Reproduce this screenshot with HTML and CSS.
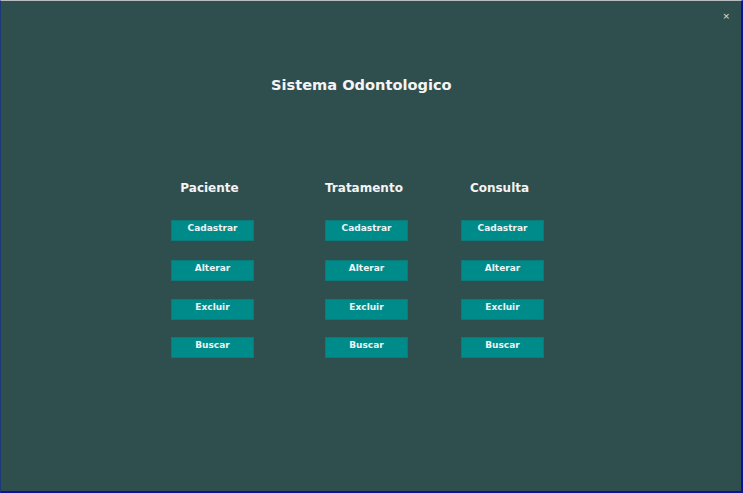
FILE: index.html
```html
<!DOCTYPE html>
<html lang="pt">
<head>
<meta charset="utf-8">
<title>Sistema Odontologico</title>
<link rel="stylesheet" href="styles.css">
</head>
<body>
<div class="window">
  <span class="close">×</span>
  <h1 class="title">Sistema Odontologico</h1>
  <div class="menu">
    <div class="col">
      <h2 class="head">Paciente</h2>
      <button class="btn">Cadastrar</button>
      <button class="btn">Alterar</button>
      <button class="btn">Excluir</button>
      <button class="btn">Buscar</button>
    </div>
    <div class="col">
      <h2 class="head">Tratamento</h2>
      <button class="btn">Cadastrar</button>
      <button class="btn">Alterar</button>
      <button class="btn">Excluir</button>
      <button class="btn">Buscar</button>
    </div>
    <div class="col">
      <h2 class="head">Consulta</h2>
      <button class="btn">Cadastrar</button>
      <button class="btn">Alterar</button>
      <button class="btn">Excluir</button>
      <button class="btn">Buscar</button>
    </div>
  </div>
</div>
</body>
</html>
```
FILE: styles.css
```css
html, body {
  margin: 0;
  padding: 0;
}
body {
  width: 743px;
  height: 493px;
  overflow: hidden;
  font-family: "DejaVu Sans", sans-serif;
}
.window {
  position: relative;
  box-sizing: border-box;
  width: 743px;
  height: 493px;
  background: #2f4f4f;
  border-top: 1px solid #b8bcc0;
  border-left: 1px solid #1c3a7a;
  border-right: 2px solid #1010a0;
  border-bottom: 2px solid #1010a0;
  display: flex;
  flex-direction: column;
  align-items: flex-start;
}
.close {
  position: absolute;
  right: 11px;
  top: 8px;
  color: #e0e4e4;
  font-size: 9px;
  line-height: 14px;
}
.title {
  margin: 73px 0 0 270px;
  color: #f4f4f4;
  font-size: 14.6px;
  font-weight: bold;
  line-height: 22px;
}
.menu {
  display: grid;
  grid-template-columns: 154px 136px 83px;
  margin: 84px 0 0 170px;
}
.col {
  display: flex;
  flex-direction: column;
  align-items: flex-start;
  width: 83px;
}
.head {
  margin: 0 0 6px 0;
  box-sizing: border-box;
  width: 83px;
  padding-right: 6px;
  text-align: center;
  color: #f4f4f4;
  font-size: 12px;
  font-weight: bold;
  line-height: 16px;
}
.btn {
  width: 83px;
  height: 21px;
  margin: 18px 0 0 0;
  padding: 0 0 6px 0;
  box-sizing: border-box;
  background: #008b8b;
  border: 1px solid #0a7a7a;
  color: #eef4f4;
  font-family: "DejaVu Sans", sans-serif;
  font-size: 9px;
  font-weight: bold;
  line-height: 12px;
}
.btn:nth-child(3) {
  margin-top: 19px;
}
.btn:nth-child(5) {
  margin-top: 17px;
}
```
